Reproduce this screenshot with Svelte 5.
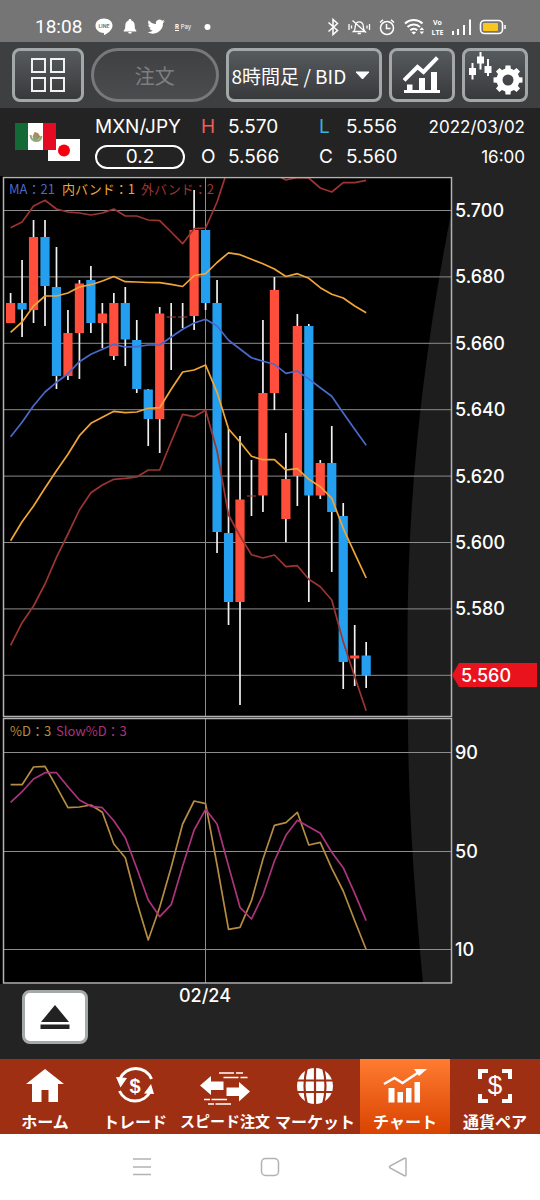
<script>
  const x = (i) => 10.6 + i * 11.47;

  // [direction, high, body top, body bottom, low]
  const candles = [
    ['u', 293, 303, 323, 323], ['d', 260, 303, 309.5, 337], ['u', 220, 237, 310, 323], ['d', 220, 237, 286, 326],
    ['d', 247, 287, 376, 389], ['u', 310, 333, 376, 380], ['u', 280, 283.5, 333, 379], ['d', 266, 280, 323, 333],
    ['u', 303, 313.5, 323, 348], ['u', 293, 303, 356, 360], ['d', 287, 303, 339.5, 366], ['d', 320, 340, 389, 393],
    ['d', 389, 389.5, 419, 446], ['u', 307, 313.5, 419, 453], ['n', 303, 316.5, 317.5, 370], ['n', 303, 316.5, 317.5, 328],
    ['u', 190, 230, 316, 330], ['d', 230, 230, 303, 310], ['d', 280, 303, 532, 553], ['d', 429, 533, 602, 625],
    ['u', 436, 499.5, 602, 705], ['n', 460, 495.5, 496.5, 516], ['u', 320, 393, 495.5, 512], ['u', 277, 290, 393, 410],
    ['u', 433, 479, 519, 542], ['u', 314, 326, 476, 506], ['d', 324, 326, 495.5, 602], ['u', 460, 463, 495.5, 499],
    ['d', 426, 463, 512, 572], ['d', 503, 516, 662, 689], ['u', 625, 655.5, 658.5, 686], ['d', 642, 655.5, 675.5, 688]
  ];

  const bands = [
    { color: '#9c3432', ys: [227.7, 222, 206, 200.3, 209, 212, 213, 215, 213, 209, 216, 216, 220, 220.7, 232, 243.7, 228.7, 228, 202, 167, 160, 160, 166, 174, 180, 177.5, 178, 188, 192, 182.7, 182.7, 180.3] },
    { color: '#9c3432', ys: [645.3, 622.7, 606, 584, 557.3, 534, 510, 492.7, 485, 479.3, 478.3, 477, 470, 470, 441.7, 414.3, 416.7, 410.3, 451, 515, 536, 554.7, 558, 555, 566.7, 565.7, 579.3, 586.7, 600, 641.7, 676.7, 710.7] },
    { color: '#f0a537', ys: [332.3, 322, 306, 296, 296, 293, 287, 284.7, 281, 276.5, 281.7, 282, 282.5, 282.7, 284.3, 286.5, 275.7, 273.7, 262.5, 252.8, 254.7, 259.3, 263.7, 269, 276.5, 273.7, 278.3, 287.7, 294.3, 298, 306, 312.7] },
    { color: '#f0a537', ys: [540.7, 521.7, 506, 488, 470.7, 454.3, 435.7, 423.3, 417.3, 411.3, 412.7, 412, 408.3, 407.7, 389.3, 372, 370, 365, 392.3, 429, 442, 456.3, 459.7, 459.7, 470, 468.7, 479.3, 486.7, 498.3, 528.3, 553.3, 578] },
    { color: '#4a69cc', ys: [436.7, 422.3, 405.7, 392, 382.3, 373.7, 361.7, 354.3, 349.3, 344.3, 347, 346.7, 345, 345, 337, 329.3, 323, 319.3, 326, 340.3, 349, 357.7, 361.3, 364.3, 373.3, 371, 379, 387.7, 396.3, 413, 429.3, 445.3] }
  ];

  const oscillators = [
    { color: '#b58d42', ys: [784.7, 784.7, 767, 766.3, 786.7, 807.7, 807, 805, 812.3, 844, 857.7, 901.7, 940, 907.3, 867.3, 824, 801, 803.7, 865, 929.3, 927.3, 900.7, 859.3, 825.3, 822.7, 812.3, 845, 842.3, 868.3, 891, 920.7, 949.5] },
    { color: '#ad347c', ys: [802.3, 791.7, 779, 772.7, 772.7, 786.7, 800, 806.3, 807.7, 820.7, 837.7, 868.3, 900, 916.7, 904.7, 866, 830, 809.3, 824, 866, 907.3, 919, 895, 861, 835.3, 820.3, 826.7, 833.3, 852.3, 867.7, 893.3, 920.7] }
  ];

  const prices = [5.7, 5.68, 5.66, 5.64, 5.62, 5.6, 5.58, 5.56].map((p, i) => ({ label: p.toFixed(3), y: 210.5 + i * 66.4 }));
  const levels = [{ label: '90', y: 752.5 }, { label: '50', y: 851.5 }, { label: '10', y: 949.5 }];
  const points = (ys) => ys.map((y, i) => `${x(i)},${y}`).join(' ');
  const teeth = [0, 45, 90, 135, 180, 225, 270, 315];
  const tabs = ['ホーム', 'トレード', 'スピード注文', 'マーケット', 'チャート', '通貨ペア'];
</script>

<main>
  <header class="status">
    <span class="clock">18:08</span>
    <svg class="left-icons" width="126" height="20" viewBox="94 17 126 20" aria-hidden="true">
      <g fill="#fff">
        <path d="M104 18.500c5 0 8.500 3 8.500 7 0 4.500-5 8-8 9.500-.8.300-.6-1-.5-2-5-.2-8.500-3.200-8.500-7.300 0-4.200 3.500-7.200 8.500-7.200z" />
        <path d="M130 19c.9 0 1.400.6 1.400 1.400 2.300.8 3.300 2.700 3.300 5 0 3.100.5 4 1.600 5v1h-12.600v-1c1.100-1 1.600-1.900 1.600-5 0-2.300 1-4.200 3.300-5 0-.8.500-1.400 1.400-1.400zM128.200 32h3.600c0 2.300-3.600 2.300-3.600 0z" />
        <path transform="translate(147.500 18) scale(.72)" d="M24 4.500a10 10 0 0 1-2.800.8 5 5 0 0 0 2.100-2.700 10 10 0 0 1-3.100 1.200 4.900 4.900 0 0 0-8.400 4.500A14 14 0 0 1 1.700 3.100a4.900 4.900 0 0 0 1.500 6.600 5 5 0 0 1-2.200-.6 4.900 4.900 0 0 0 3.900 4.900 5 5 0 0 1-2.200.1 4.900 4.900 0 0 0 4.600 3.400A10 10 0 0 1 0 19.500 14 14 0 0 0 21.500 7a10 10 0 0 0 2.500-2.500z" />
        <circle cx="207.500" cy="27" r="3" />
      </g>
      <text x="104" y="28" text-anchor="middle" class="line-mark">LINE</text>
      <text x="175" y="29" class="pay-mark"><tspan font-weight="700">R</tspan> Pay</text>
      <path d="M175 30.500h4" stroke="#fff" />
    </svg>
    <svg class="right-icons" width="182" height="20" viewBox="324 17 182 20" fill="none" stroke="#fff" stroke-width="1.500" aria-hidden="true">
      <path d="M328.500 22.500l9 8-4.500 4V19.500l4.500 4-9 8" />
      <path d="M353.500 31.500c2-1.500 1.500-3 1.800-5.500.3-3 1.700-4.200 4-4.200s3.700 1.200 4 4.200c.2 2.500 0 4 1.700 5.500zM357.700 33.500h3.200M352.500 20.500l13.500 12M349 24v6M351.500 25.500v3M367 25.500v3M369.500 24v6" stroke-width="1.300" />
      <circle cx="387" cy="28" r="6.500" /><path d="M386.500 24v4.500h4M380 22.500l3-2.800M394 22.500l-3-2.800" />
      <path d="M405 23.500a13 13 0 0 1 17.500 0M407.500 27a9 9 0 0 1 12.500 0M410.300 30.300a5 5 0 0 1 7 0" stroke-width="2" />
      <path d="M411.500 32.500a3 3 0 0 1 4.500 0l-2.200 2zM419.500 30l2.300-2.700 2.300 2.700zM419.500 31.500l2.300 2.700 2.300-2.700z" fill="#fff" stroke="none" />
      <g class="volte"><text x="437.500" y="25" text-anchor="middle">Vo</text><text x="437.500" y="35" text-anchor="middle">LTE</text></g>
      <path d="M453 31v4M458 29v6M464 25v10M470 19.500v15.500" stroke-width="2" />
      <rect x="480.500" y="20.500" width="22" height="13" rx="4" stroke-width="1.600" />
      <rect x="483" y="23" width="15" height="8" rx="1" fill="#f9c51f" stroke="none" /><path d="M505 25v4" />
    </svg>
  </header>

  <nav class="toolbar" aria-label="チャート操作">
    <button class="box" aria-label="レイアウト">
      <svg width="34" height="34" viewBox="0 0 34 34" fill="none" stroke="#f1f1f1" stroke-width="2"><path d="M1 1h13v13H1zM20 1h13v13H20zM1 20h13v13H1zM20 20h13v13H20z" /></svg>
    </button>
    <button class="box order" disabled>注文</button>
    <div class="picker">
      <select class="box" aria-label="足種"><option>8時間足 / BID</option></select>
      <svg width="15" height="9" viewBox="0 0 15 9" aria-hidden="true"><path d="M1 1h13L7.500 8z" fill="#fff" stroke="#fff" stroke-linejoin="round" /></svg>
    </div>
    <button class="box" aria-label="テクニカル">
      <svg width="40" height="38" viewBox="0 0 40 38"><path d="M3.500 23L15.500 11l6 5L34 3" fill="none" stroke="#fff" stroke-width="4" stroke-linecap="square" /><path d="M2 34h36v3H2zM5 28.500h5.500V35H5zM17 22h6v13h-6zM29 16h6v19h-6z" fill="#fff" /></svg>
    </button>
    <button class="box" aria-label="チャート設定">
      <svg width="56" height="46" viewBox="0 0 56 46" fill="#fff">
        <path d="M2 16h7v7H2zM10 4.500h7v7h-7zM17.500 14h7v7h-7z" /><path d="M5.500 11v16.500M13.500 0v17.500M21 7v17" stroke="#fff" stroke-width="2" />
        <circle cx="41" cy="28" r="8.500" fill="none" stroke="#fff" stroke-width="6" />
        {#each teeth as a}<path d="M38 18.500l.5-5h5l.5 5z" transform="rotate({a} 41 28)" />{/each}
      </svg>
    </button>
  </nav>

  <section class="quote">
    <svg class="flags" width="66" height="39" viewBox="0 0 66 39" aria-hidden="true">
      <path d="M33 16h32v22H33z" fill="#fff" /><circle cx="49" cy="27.500" r="6" fill="#f5000e" />
      <path d="M0 0h41v27H0z" fill="#fff" /><path d="M0 0h13v27H0z" fill="#136a36" /><path d="M28 0h13v27H28z" fill="#e50b22" />
      <path d="M15.500 12c.5 4 2.500 6 5.500 6s5-2 5.500-5" fill="none" stroke="#98aa6b" stroke-width="2" /><path d="M17.500 14l2-5 3.500 1 2.500 4-3 3-3-1z" fill="#a98d57" /><circle cx="20" cy="15.500" r="2" fill="#74a6a0" />
    </svg>
    <strong class="pair">MXN/JPY</strong>
    <span class="high">H</span><span>5.570</span>
    <span class="low">L</span><span>5.556</span>
    <time class="date">2022/03/02</time>
    <span class="spread">0.2</span>
    <span>O</span><span>5.566</span>
    <span>C</span><span>5.560</span>
    <time class="date">16:00</time>
  </section>

  <svg class="chart" viewBox="0 176 540 542" role="img" aria-label="MXN/JPY 8時間足">
    <defs><clipPath id="price-area"><rect x="4" y="178" width="447" height="538" /></clipPath></defs>
    <rect x="0" y="176" width="452" height="542" />
    <g clip-path="url(#price-area)">
      <path d="M451 214Q407 436 407.500 640V718H451z" fill="#1d1d1d" />
      {#each prices as p}<path d="M4 {p.y}H451" class="rule" />{/each}
      <path d="M205.500 177V717" class="rule" />
      {#each candles as [kind, high, top, bottom, low], i}
        <path d="M{x(i)} {high}V{low}" stroke="#f1f1f1" stroke-width="1.700" />
        <rect x={x(i) - 4.6} y={top} width="9.200" height={bottom - top} fill={kind === 'd' ? '#249ff0' : kind === 'u' ? '#ff4e3c' : '#a44840'} />
      {/each}
      {#each bands as b}<polyline points={points(b.ys)} stroke={b.color} class="series" />{/each}
    </g>
    <g class="legend">
      <text x="9" y="194" fill="#4a69cc">MA：21</text>
      <text x="62" y="194" fill="#f0a537">内バンド：1</text>
      <text x="141" y="194" fill="#9c3432">外バンド：2</text>
    </g>
    <rect x="3.500" y="177.500" width="448" height="539" class="frame" />
    <path d="M452 675l7-12h78v24h-78z" fill="#e9131e" />
    {#each prices as p, i}<text x={i === 7 ? 461 : 455} y={p.y + 6.500} class="axis">{p.label}</text>{/each}
  </svg>
  <svg class="chart" viewBox="0 718 540 266" role="img" aria-label="ストキャスティクス">
    <rect x="0" y="718" width="452" height="266" />
    <path d="M408 718C408 800 414 890 423 983H451V718z" fill="#1d1d1d" />
    {#each levels as l}<path d="M4 {l.y}H451" class="rule" /><text x="455" y={l.y + 6.500} class="axis">{l.label}</text>{/each}
    <path d="M205.500 719V983" class="rule" />
    {#each oscillators as o}<polyline points={points(o.ys)} stroke={o.color} class="series" />{/each}
    <g class="legend"><text x="10" y="736" fill="#b58d42">%D：3</text><text x="56" y="736" fill="#ad347c">Slow%D：3</text></g>
    <rect x="3.500" y="718.500" width="448" height="264.500" class="frame" />
    <text x="205" y="1002" text-anchor="middle" class="axis">02/24</text>
  </svg>

  <section class="drawer">
    <button aria-label="パネルを開く"><svg width="30" height="26" viewBox="0 0 30 26" fill="#222"><path d="M15 1l14 17H1zM.500 20.500h29V25H.500z" /></svg></button>
  </section>

  <nav class="tabs" aria-label="メイン">
    {#each tabs as tab, i}
      <a href="#tab-{i}" class:active={i === 4} class:long={i === 2}>
        <svg width="54" height="42" viewBox="0 0 54 42" fill="#fff" stroke="none" aria-hidden="true">
          {#if i === 0}
            <path d="M27 3l19 15h-6v18h-9.500V24h-7v12H14V18H8z" />
          {:else if i === 1}
            <g fill="none" stroke="#fff" stroke-width="3"><path d="M12 13a17 17 0 0 1 31.500 0M42.500 25a17 17 0 0 1-31 0" /></g>
            <path d="M8 11l11 1-6.500 9.500zM46 28l-10-.5 7-9.500z" /><text x="27" y="27" text-anchor="middle" class="dollar">$</text>
          {:else if i === 2}
            <path d="M2 19.500L13 10v5.500h12.500V24H13v5zM52 25.500L41 16v5.500H28.500V30H41v5.500z" />
            <path d="M21 7h15M38 7h7M25.500 11.500h15M42.500 11.500h7M6 33.500h6M13.500 33.500H29M10 38h6M17.500 38H33" stroke="#fff" stroke-width="1.500" />
          {:else if i === 3}
            <circle cx="27" cy="20" r="18" />
            <path d="M27 0v40M8 14.500h38M8 26h38M19 1q-5 19 0 38M35 1q5 19 0 38" fill="none" stroke="#9f2f13" stroke-width="2.200" />
          {:else if i === 4}
            <path d="M6 18l10.500-6 8 5L41 6" fill="none" stroke="#fff" stroke-width="2.500" /><path d="M36 3h13l-8 7z" />
            <path d="M10.500 22h6v14.500h-6zM19.500 26h5.500v10.500h-5.500zM28 22h5.500v14.500H28zM36.500 16H42v20.500h-5.500z" />
          {:else}
            <path d="M12 13V5h8M34 5h8v8M42 28v7h-8M20 35h-8v-7" fill="none" stroke="#fff" stroke-width="4" /><text x="27" y="28" text-anchor="middle" class="dollar large">$</text>
          {/if}
        </svg>
        <span>{tab}</span>
      </a>
    {/each}
  </nav>

  <footer>
    <button aria-label="履歴"><svg width="20" height="20" viewBox="0 0 20 20"><path d="M1 2h18M1 10h18M1 17.500h18" /></svg></button>
    <button aria-label="ホーム画面"><svg width="20" height="20" viewBox="0 0 20 20"><rect x="1.500" y="1.500" width="17" height="17" rx="4" /></svg></button>
    <button aria-label="戻る"><svg width="20" height="20" viewBox="0 0 20 20"><path d="M2 9Q1 10 2 11L16 18.500Q18 19.500 18 17.500V2.500Q18 .500 16 1.500z" /></svg></button>
  </footer>
</main>

<style>
  :global(body) { margin: 0; background: #fff; }
  main { display: flex; flex-direction: column; color: #fff; background: #232323; font-family: Inter, "Noto Sans CJK JP", sans-serif; }
  button, select { font: inherit; color: inherit; padding: 0; margin: 0; }
  svg { display: block; flex: none; }

  .status { display: flex; align-items: flex-end; gap: 12px; height: 37px; padding: 0 34px 5px 35px; background: #757575; }
  .clock { font: 19px/20px Roboto, sans-serif; }
  .right-icons { margin-left: auto; }
  .line-mark { font: 700 5px Inter, sans-serif; fill: #757575; }
  .pay-mark { font: 6px Inter, sans-serif; fill: #fff; }
  .volte { font: 700 7px "Open Sans", sans-serif; fill: #fff; stroke: none; }

  .toolbar { display: grid; grid-template-columns: 72fr 128fr 157fr 66fr 66fr; gap: 7px; padding: 6px 12px; background: #3e3f41; border-bottom: 1px solid #232323; }
  .box { box-sizing: border-box; width: 100%; min-width: 0; height: 54px; border: 3px solid #a2a7a8; border-radius: 8px; background: linear-gradient(#575b5e, #38393b); display: flex; align-items: center; justify-content: center; }
  .order { border-color: #78797b; border-radius: 27px; background: linear-gradient(#404143, #4b4c4e); color: #7e7e80; font-size: 20px; }
  .picker { display: grid; align-items: center; min-width: 0; }
  .picker > * { grid-area: 1 / 1; }
  .picker select { appearance: none; padding: 0 0 0 3px; font: 19px "Noto Sans CJK JP", sans-serif; }
  .picker svg { justify-self: end; margin-right: 12px; pointer-events: none; }

  .quote { display: grid; grid-template-columns: 80px 106px 27px 91fr 27px 83fr 96px; grid-template-rows: 30px 30px; align-items: center; padding: 3px 15px 4px; font-size: 19px; line-height: 30px; }
  .flags { grid-row: 1 / 3; }
  .pair { font-weight: 400; }
  .high { color: #ee5f59; }
  .low { color: #35b4d8; }
  .date { justify-self: end; font-size: 17px; }
  .spread { box-sizing: border-box; width: 90px; height: 24px; border: 2px solid #fff; border-radius: 12px; line-height: 20px; text-align: center; }

  .chart { width: 100%; height: auto; overflow: visible; }
  .rule { fill: none; stroke: #8c8c8c; stroke-width: 1; }
  .frame { fill: none; stroke: #b4b2b4; stroke-width: 1.500; }
  .series { fill: none; stroke-width: 1.700; stroke-linejoin: round; }
  .axis { font: 500 18px Inter, sans-serif; fill: #fff; }
  .legend { font: 13px "Noto Sans CJK JP", sans-serif; }

  .drawer { padding: 6px 22px 15px; }
  .drawer button { display: grid; place-items: center; width: 66px; height: 54px; border: 3px solid #a4a9aa; border-radius: 8px; background: #fff; }

  .tabs { display: grid; grid-template-columns: repeat(6, minmax(0, 1fr)); background: #9f2f13; }
  .tabs a { display: flex; flex-direction: column; align-items: center; height: 68px; padding: 7px 0 0; color: #fff; text-decoration: none; font: 700 16px/26px "Noto Sans CJK JP", sans-serif; white-space: nowrap; }
  .tabs .long { font-size: 15px; }
  .tabs .active { background: linear-gradient(#ff7c31, #d94300); }
  .dollar { font: 700 20px "Liberation Sans", sans-serif; }
  .large { font-size: 26px; font-weight: 400; }

  footer { display: flex; justify-content: center; gap: 108px; padding: 23px 0; background: #fff; }
  footer button { width: 20px; height: 20px; border: 0; background: none; }
  footer svg { fill: none; stroke: #b2b2b2; stroke-width: 1.500; }
</style>
